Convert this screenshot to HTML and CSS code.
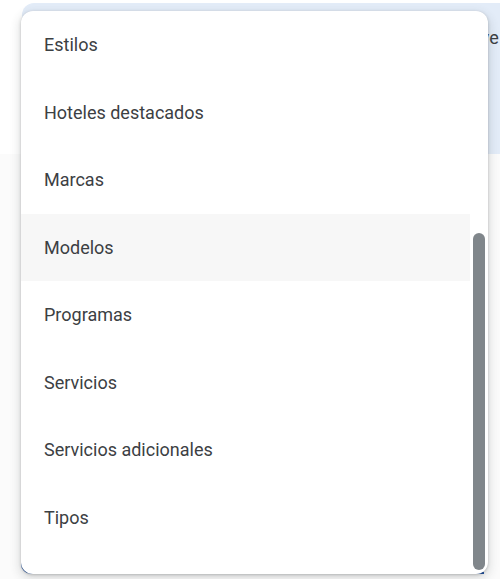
FILE: index.html
```html
<!DOCTYPE html>
<html lang="es">
<head>
<meta charset="utf-8">
<link rel="stylesheet" href="styles.css">
</head>
<body>
<div class="page">
  <div class="card"><span class="card-text">Breve</span></div>
  <div class="below">
    <div class="field"></div>
  </div>
</div>
<div class="menu" role="listbox">
  <ul class="list">
    <li class="item">Estilos</li>
    <li class="item">Hoteles destacados</li>
    <li class="item">Marcas</li>
    <li class="item active">Modelos</li>
    <li class="item">Programas</li>
    <li class="item">Servicios</li>
    <li class="item">Servicios adicionales</li>
    <li class="item">Tipos</li>
  </ul>
  <div class="thumb"></div>
</div>
</body>
</html>
```
FILE: styles.css
```css
html, body {
  margin: 0;
  padding: 0;
}
body {
  width: 500px;
  height: 579px;
  overflow: hidden;
  position: relative;
  background: #ffffff;
  font-family: Roboto, "Liberation Sans", Arial, sans-serif;
}
.page {
  display: flex;
  flex-direction: column;
  height: 579px;
}
.card {
  margin: 3px 0 0 22px;
  height: 151px;
  background: #e3ecf8;
  border-top-left-radius: 12px;
  padding: 24px 0 0 432px;
  box-sizing: border-box;
  white-space: nowrap;
  overflow: hidden;
}
.card-text {
  font-size: 18px;
  color: #3c4043;
}
.below {
  flex: 1;
  background: #fbfbfb;
  padding: 0 16px 5px 21px;
  display: flex;
}
.field {
  flex: 1;
  border-left: 2px solid #1b4c9e;
  border-bottom: 2px solid #1b4c9e;
  border-bottom-left-radius: 10px;
}
.menu {
  position: absolute;
  left: 21px;
  top: 11px;
  width: 467px;
  height: 563px;
  background: #ffffff;
  border-radius: 12px;
  overflow: hidden;
  box-shadow: 0 1px 3px rgba(60, 64, 67, 0.3), 0 4px 8px 3px rgba(60, 64, 67, 0.12);
}
.list {
  list-style: none;
  margin: 0;
  padding: 0;
  width: 449px;
}
.item {
  height: 67.5px;
  display: flex;
  align-items: center;
  padding-left: 23px;
  font-size: 18px;
  color: #3c4043;
}
.item.active {
  background: #f7f7f7;
}
.thumb {
  position: absolute;
  right: 3px;
  top: 222px;
  width: 12px;
  height: 337px;
  border-radius: 6px;
  background: #80868b;
}
```
